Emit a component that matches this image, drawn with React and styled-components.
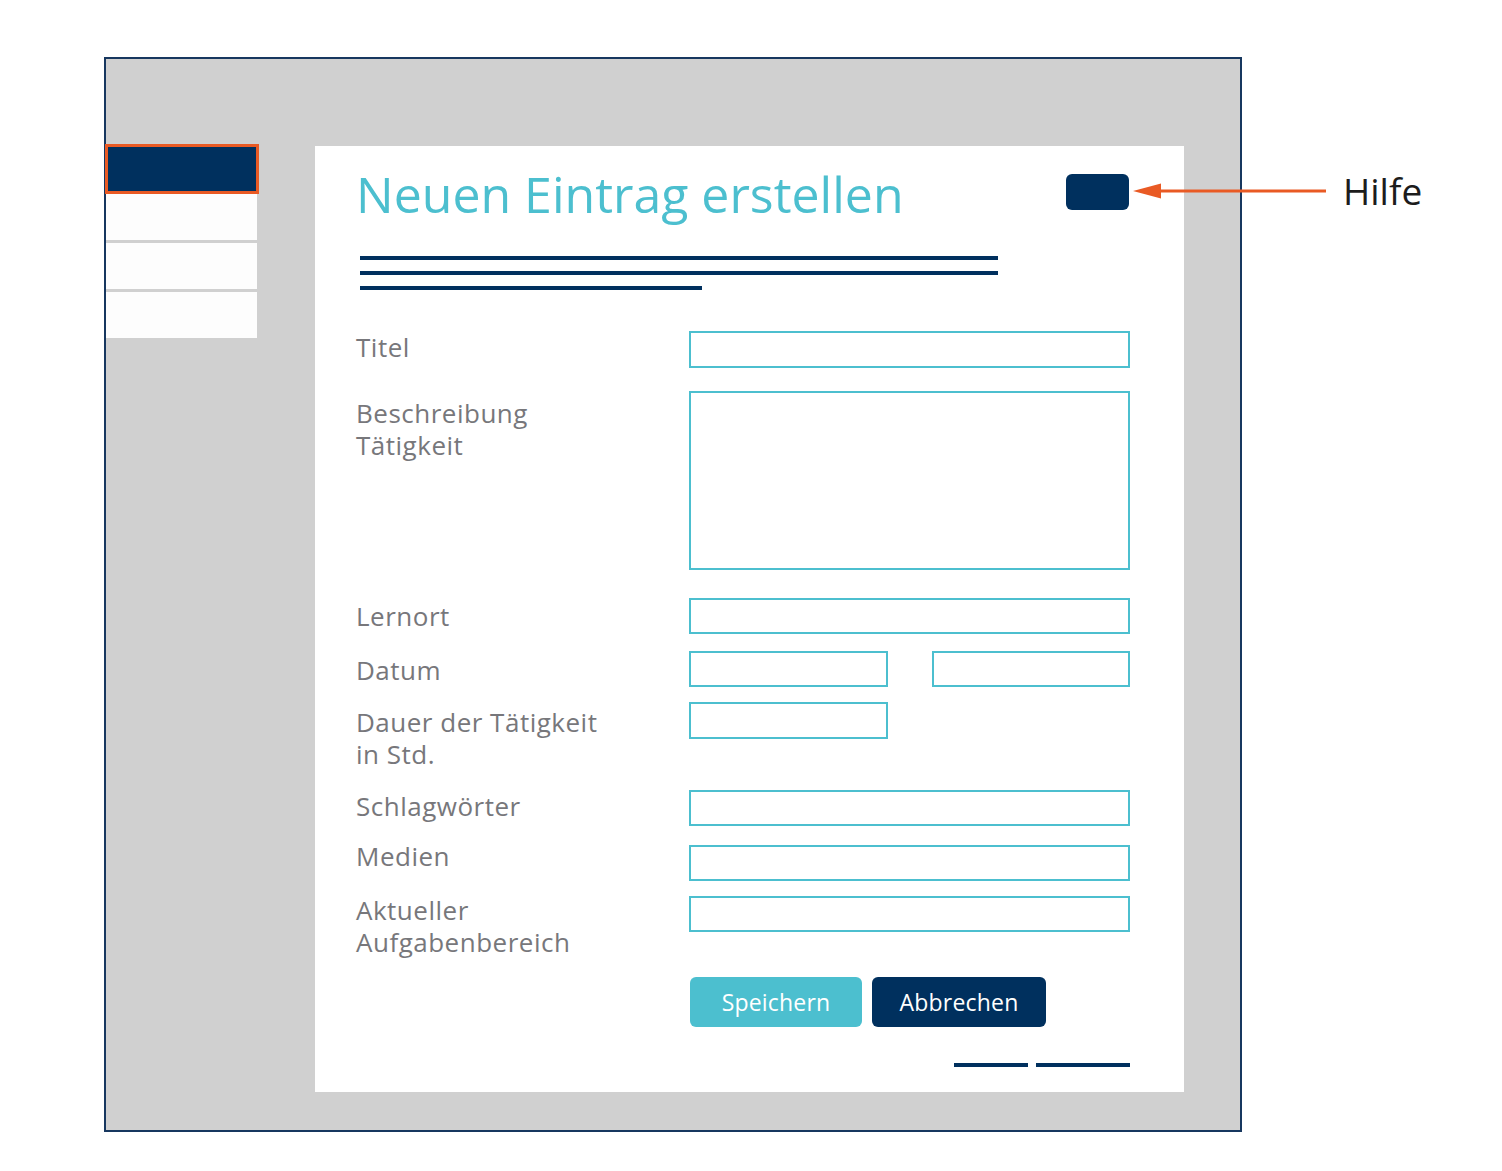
import styled, { createGlobalStyle } from "styled-components";

const Global = createGlobalStyle`
  body {
    margin: 0;
    background: #ffffff;
    font-family: "Open Sans", "Noto Sans", sans-serif;
  }
`;

const NAVY = "#00305e";
const TEAL = "#4cbfcf";
const ORANGE = "#e95a24";

const Page = styled.div`
  position: relative;
  width: 1502px;
  height: 1171px;
  padding: 57px 0 0 104px;
  box-sizing: border-box;
`;

// grauer Rahmen = Bildschirm
const Screen = styled.div`
  width: 1138px;
  height: 1075px;
  box-sizing: border-box;
  border: 2px solid #17375f;
  background: #d0d0d0;
  display: flex;
  align-items: flex-start;
`;

const Sidebar = styled.nav`
  width: 151px;
  margin-top: 85px;
  display: flex;
  flex-direction: column;
  gap: 3px;
`;

const NavItem = styled.div`
  height: 46px;
  background: #fdfdfd;
`;

const ActiveItem = styled.div`
  height: 50px;
  box-sizing: border-box;
  margin: 0 -2px -3px -1px;
  border: 3px solid ${ORANGE};
  background: ${NAVY};
`;

const Card = styled.section`
  width: 869px;
  height: 946px;
  margin: 87px 0 0 58px;
  box-sizing: border-box;
  padding: 18px 54px 0 41px;
  background: #ffffff;
  display: flex;
  flex-direction: column;
`;

const Header = styled.div`
  display: flex;
  justify-content: space-between;
  align-items: flex-start;
`;

const Title = styled.h1`
  margin: 0;
  font-size: 50px;
  line-height: 60px;
  font-weight: 400;
  color: ${TEAL};
`;

const HelpButton = styled.button`
  width: 63px;
  height: 36px;
  margin: 10px 1px 0 0;
  border: 0;
  border-radius: 6px;
  background: ${NAVY};
`;

const Lines = styled.div`
  margin: 32px 0 0 4px;
  display: flex;
  flex-direction: column;
  gap: 11px;
`;

const Line = styled.div`
  width: ${(p) => p.$w}px;
  height: 4px;
  background: ${NAVY};
`;

const Form = styled.form`
  margin-top: 41px;
  display: flex;
  flex-direction: column;
`;

const Row = styled.div`
  display: grid;
  grid-template-columns: 333px 441px;
  align-items: start;
  margin-top: ${(p) => p.$mt || 0}px;
`;

const Label = styled.label`
  margin-top: ${(p) => p.$off || 0}px;
  font-size: 26px;
  line-height: 32px;
  letter-spacing: 0.5px;
  color: #77777b;
`;

const Fields = styled.div`
  display: flex;
  justify-content: space-between;
`;

const Input = styled.div`
  width: ${(p) => p.$w || 441}px;
  height: ${(p) => p.$h || 36}px;
  box-sizing: border-box;
  border: 2px solid ${TEAL};
  background: #ffffff;
`;

const Buttons = styled.div`
  grid-column: 2;
  display: flex;
  gap: 10px;
  margin-left: 1px;
`;

const Button = styled.button`
  height: 50px;
  width: ${(p) => p.$w}px;
  border: 0;
  border-radius: 6px;
  background: ${(p) => (p.$primary ? TEAL : NAVY)};
  color: #ffffff;
  font-family: "Open Sans", sans-serif;
  font-size: 23px;
  letter-spacing: 0.2px;
  padding: 0;
`;

const Footer = styled.div`
  margin-top: 36px;
  display: flex;
  justify-content: flex-end;
  gap: 8px;
`;

const Dash = styled.div`
  width: ${(p) => p.$w}px;
  height: 4px;
  background: ${NAVY};
`;

// Pfeil + "Hilfe" liegen über dem Rahmen
const Annotation = styled.div`
  position: absolute;
  left: 1133px;
  top: 166px;
  height: 50px;
  display: flex;
  align-items: center;
  gap: 17px;
`;

const Note = styled.span`
  font-size: 37px;
  line-height: 50px;
  color: #1c1c1c;
`;

function Arrow() {
  return (
    <svg width="193" height="16" viewBox="0 0 193 16">
      <polygon points="0,8 28,0.5 28,15.5" fill={ORANGE} />
      <line x1="26" y1="8" x2="193" y2="8" stroke={ORANGE} strokeWidth="3" />
    </svg>
  );
}

function App() {
  return (
    <Page>
      <Global />
      <Screen>
        <Sidebar>
          <ActiveItem />
          <NavItem />
          <NavItem />
          <NavItem />
        </Sidebar>
        <Card>
          <Header>
            <Title>Neuen Eintrag erstellen</Title>
            <HelpButton aria-label="Hilfe" />
          </Header>
          <Lines>
            <Line $w={638} />
            <Line $w={638} />
            <Line $w={342} />
          </Lines>
          <Form>
            <Row>
              <Label>Titel</Label>
              <Input $h={37} />
            </Row>
            <Row $mt={23}>
              <Label $off={6}>
                Beschreibung
                <br />
                Tätigkeit
              </Label>
              <Input $h={179} />
            </Row>
            <Row $mt={28}>
              <Label $off={2}>Lernort</Label>
              <Input />
            </Row>
            <Row $mt={17}>
              <Label $off={3}>Datum</Label>
              <Fields>
                <Input $w={199} />
                <Input $w={198} />
              </Fields>
            </Row>
            <Row $mt={15}>
              <Label $off={4}>
                Dauer der Tätigkeit
                <br />
                in Std.
              </Label>
              <Input $w={199} $h={37} />
            </Row>
            <Row $mt={20}>
              <Label>Schlagwörter</Label>
              <Input />
            </Row>
            <Row $mt={19}>
              <Label $off={-5}>Medien</Label>
              <Input />
            </Row>
            <Row $mt={15}>
              <Label $off={-2}>
                Aktueller
                <br />
                Aufgabenbereich
              </Label>
              <Input />
            </Row>
            <Row $mt={19}>
              <Buttons>
                <Button type="button" $primary $w={172}>
                  Speichern
                </Button>
                <Button type="button" $w={174}>
                  Abbrechen
                </Button>
              </Buttons>
            </Row>
          </Form>
          <Footer>
            <Dash $w={74} />
            <Dash $w={94} />
          </Footer>
        </Card>
      </Screen>
      <Annotation>
        <Arrow />
        <Note>Hilfe</Note>
      </Annotation>
    </Page>
  );
}

export default App;
